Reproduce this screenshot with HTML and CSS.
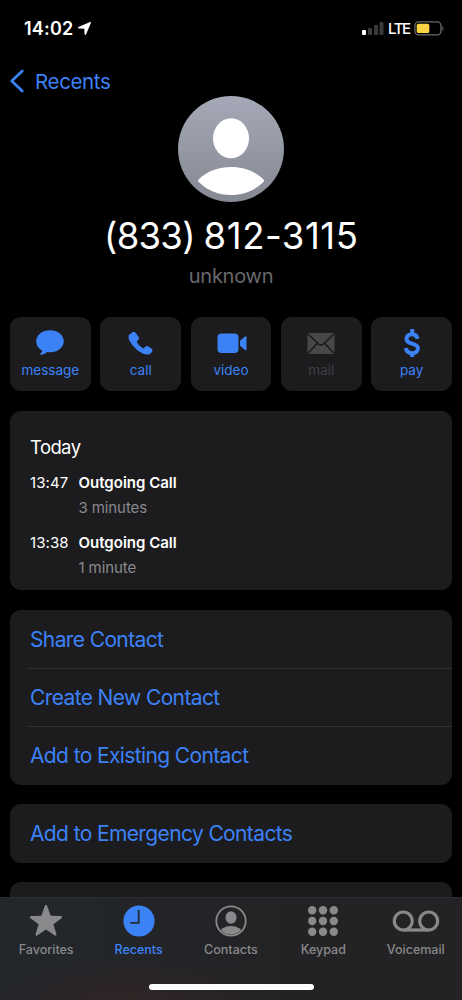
FILE: index.html
```html
<!DOCTYPE html>
<html lang="en">
<head>
<meta charset="utf-8">
<title>Contact</title>
<link rel="stylesheet" href="styles.css">
</head>
<body>
<div class="phone">
  <header class="status">
    <span class="time">14:02</span>
    <svg class="loc" width="13" height="13" viewBox="0 0 13 13"><path d="M12.100.1.4 5c-.6.300-.4 1.500.2 1.500l5.700.3.300 5.500c0 .8 1.100.9 1.400.2L12.900.9c.2-.5-.2-1-.8-.8Z"/></svg>
    <svg class="signal" width="22" height="14" viewBox="0 0 22 14"><rect class="on" x="0" y="8" width="4" height="5" rx="1"/><rect x="6" y="6" width="4" height="7" rx="1"/><rect x="12" y="3" width="4" height="10" rx="1"/><rect x="17.500" y="0" width="4" height="13" rx="1"/></svg>
    <span class="lte">LTE</span>
    <svg class="battery" width="31" height="15" viewBox="0 0 31 15"><rect class="shell" x=".9" y=".9" width="26" height="13" rx="3.600"/><rect class="charge" x="2.700" y="2.700" width="12.600" height="9.400" rx="1.600"/><path class="tip" d="M28.300 5v4.800c1.600-.6 1.600-4.200 0-4.800Z"/></svg>
  </header>
  <nav class="back">
    <svg width="16" height="24" viewBox="0 0 16 24"><path d="M13.200 2 2.700 12l10.500 10"/></svg>
    <span>Recents</span>
  </nav>
  <section class="profile">
    <svg width="106" height="106" viewBox="0 0 106 106">
      <defs><linearGradient id="av" x2="0" y2="1"><stop offset="0" stop-color="#a5a9b7"/><stop offset="1" stop-color="#858993"/></linearGradient></defs>
      <circle cx="53" cy="53" r="53" fill="url(#av)"/>
      <ellipse cx="53" cy="42.300" rx="18" ry="20" fill="#fff"/>
      <path fill="#fff" d="M20.700 83.500C28 76 39 71 53 71s25 5 32.500 12.500c1 1 .8 1.800-.3 2.800C76 95 65.500 99 53 99s-23-4-32-12.700c-1.100-1-1.300-1.800-.3-2.800Z"/>
    </svg>
    <h1><span class="area">(833)</span> <span class="number">812-3115</span></h1>
    <p>unknown</p>
  </section>
  <section class="actions">
    <div class="tile"><svg width="30" height="28" viewBox="0 0 30 28"><path d="M15 1.200C7.200 1.200 1.200 6 1.200 12.200c0 4 2.300 7.300 6 9.200-.3 1.300-1 2.500-1.900 3.500-.4.6 0 1 .6.9 2.800-.4 4.700-1.400 6.300-2.800.9.100 1.800.2 2.800.2 7.800 0 13.800-4.800 13.800-11S22.800 1.200 15 1.200Z"/></svg><span>message</span></div>
    <div class="tile"><svg width="30" height="28" viewBox="0 0 30 28"><path transform="translate(0 .5)" d="M4.300 4.800 6 3.100c1.300-1.200 2.700-1 3.700.3l2.700 3.700c.9 1.300.8 2.300-.3 3.500l-1 1.100c-.4.400-.4.900-.1 1.400 1.500 2.300 3.200 4 5.700 5.500.5.300.9.200 1.300-.2l1-1c1.200-1.200 2.200-1.300 3.500-.4l2.900 2.100c1.400 1 1.500 2.400.3 3.600l-1.200 1.200c-2.100 2-6 1.500-10.500-1.300-4-2.500-7.300-6-9.700-10-2.100-3.700-2.400-6.300-.3-8.300Z"/></svg><span>call</span></div>
    <div class="tile"><svg width="32" height="28" viewBox="0 0 32 28"><rect x="2.500" y="4.500" width="21" height="19.500" rx="4"/><path d="M25 11.700 30 7.500c.8-.6 1.500-.3 1.500.7v12c0 1-.7 1.400-1.500.7L25 16.700Z"/></svg><span>video</span></div>
    <div class="tile off"><svg width="30" height="28" viewBox="0 0 30 28"><rect x="1.500" y="4" width="27" height="21" rx="1.500"/><path class="fold" d="m2 5 10.800 10.100c1.500 1.300 2.900 1.300 4.400 0L28 5M2 24.300l9.500-10.200M28 24.300l-9.500-10.200"/></svg><span>mail</span></div>
    <div class="tile"><svg width="30" height="28" viewBox="0 .3 30 28"><path class="dollar" d="M20.500 10.200c-.6-3-2.500-4.600-5.500-4.600-3.300 0-5.500 1.800-5.500 4.600 0 6 11.400 3.400 11.400 9.400 0 3.100-2.300 4.900-5.800 4.900-3.500 0-5.800-1.900-6.200-5.200M15.200 0v5M15.200 24.200v5"/></svg><span>pay</span></div>
  </section>
  <section class="card history">
    <h2>Today</h2>
    <div class="entry"><time>13:47</time><div><b>Outgoing Call</b><p>3 minutes</p></div></div>
    <div class="entry"><time>13:38</time><div><b>Outgoing Call</b><p>1 minute</p></div></div>
  </section>
  <section class="card list">
    <a>Share Contact</a>
    <a>Create New Contact</a>
    <a>Add to Existing Contact</a>
  </section>
  <section class="card list single"><a>Add to Emergency Contacts</a></section>
  <section class="card peek"></section>
  <footer class="tabbar">
    <div class="tabs">
      <div class="tab"><svg width="36" height="34" viewBox="0 0 36 34"><path transform="translate(.9 -.2) scale(.95)" d="M18 1.200c.7 0 1.100.5 1.400 1.300l3.500 10.100 10.600.2c1.600 0 2 1.500.8 2.400l-8.500 6.400 3.100 10.200c.5 1.500-.8 2.300-2 1.400L18 27l-8.900 6.200c-1.200.9-2.500.1-2-1.400l3.100-10.200-8.500-6.400c-1.200-.9-.8-2.400.8-2.400l10.600-.2 3.500-10.100c.3-.8.7-1.300 1.400-1.300Z"/></svg><span>Favorites</span></div>
      <div class="tab active"><svg width="36" height="34" viewBox="0 0 36 34"><circle cx="18" cy="17" r="15.600"/><path class="hands" d="M17.700 6v12.800H9.300"/></svg><span>Recents</span></div>
      <div class="tab"><svg width="36" height="34" viewBox="0 0 36 34"><defs><clipPath id="c"><circle cx="18" cy="17" r="13.500"/></clipPath></defs><circle class="ring" cx="18" cy="17" r="14.700"/><ellipse cx="18" cy="13.500" rx="5.500" ry="6.200"/><ellipse cx="18" cy="30" rx="11.500" ry="8" clip-path="url(#c)"/></svg><span>Contacts</span></div>
      <div class="tab"><svg width="36" height="34" viewBox="0 0 36 34"><circle cx="7.200" cy="6.200" r="4.200"/><circle cx="18" cy="6.200" r="4.200"/><circle cx="28.800" cy="6.200" r="4.200"/><circle cx="7.200" cy="17" r="4.200"/><circle cx="18" cy="17" r="4.200"/><circle cx="28.800" cy="17" r="4.200"/><circle cx="7.200" cy="27.800" r="4.200"/><circle cx="18" cy="27.800" r="4.200"/><circle cx="28.800" cy="27.800" r="4.200"/></svg><span>Keypad</span></div>
      <div class="tab"><svg width="48" height="34" viewBox="0 0 48 34"><g class="reel"><circle cx="11.300" cy="17" r="9"/><circle cx="36.700" cy="17" r="9"/><path d="M11.300 26h25.400"/></g></svg><span>Voicemail</span></div>
    </div>
    <div class="home"></div>
  </footer>
</div>
</body>
</html>
```
FILE: styles.css
```css
* { box-sizing: border-box; margin: 0; padding: 0; }
body { background: #000; color: #fff; font-family: Inter, sans-serif; }
svg { display: block; flex: none; }
.phone { width: 462px; height: 1000px; overflow: hidden; position: relative; background: #000; }
.status { height: 58px; display: flex; align-items: center; padding: 0 17px 1px 24px; }
.time { font-size: 18px; font-weight: 600; letter-spacing: .2px; width: 50px; white-space: nowrap; }
.loc { fill: #fff; margin-left: 4px; margin-right: auto; }
.signal { fill: #3a3a3c; }
.signal .on { fill: #fff; }
.lte { font-size: 15px; font-weight: 500; width: 22px; margin: 0 4px 0 4px; letter-spacing: -1.4px; }
.shell { fill: none; stroke: #68686a; stroke-width: 1.3; }
.charge { fill: #fbd444; }
.tip { fill: #68686a; }
.back { height: 38px; padding: 5px 0 0 9px; display: flex; gap: 10px; color: #3c82f7; font-size: 20.5px; align-items: flex-start; }
.back svg { fill: none; stroke: #3c82f7; stroke-width: 2.8; stroke-linecap: round; stroke-linejoin: round; margin-top: 6px; }
.back span { line-height: 38px; white-space: nowrap; letter-spacing: -.35px; }
.profile { display: flex; flex-direction: column; align-items: center; height: 221px; }
.profile h1 { font-size: 36.5px; line-height: 44px; font-weight: 400; margin-top: 12px; white-space: nowrap; word-spacing: -1.5px; }
.area { letter-spacing: -.7px; }
.number { letter-spacing: .55px; margin-right: -.55px; }
.profile p { font-size: 20px; line-height: 24px; color: #69696c; margin-top: 6px; letter-spacing: -.25px; }
.actions { margin: 0 10px; display: flex; gap: 9.5px; height: 74px; }
.tile { flex: 1 1 0; background: #1c1c1e; border-radius: 11px; display: flex; flex-direction: column; align-items: center; padding-top: 12px; color: #3c82f7; fill: #3c82f7; font-size: 13.5px; }
.tile span { line-height: 18px; margin-top: 4px; }
.tile.off { color: #3f3f42; fill: #48484a; }
.fold { fill: none; stroke: #1c1c1e; stroke-width: 1.6; }
.dollar { fill: none; stroke: #3c82f7; stroke-width: 4; }
.card { margin: 19.5px 10px 0; background: #1c1c1e; border-radius: 11px; }
.history { height: 179px; padding: 24.5px 20px 0; }
.history h2 { font-size: 18.5px; font-weight: 400; line-height: 24px; letter-spacing: -.6px; margin-bottom: 12px; }
.entry { display: flex; height: 60px; font-size: 15px; line-height: 24px; }
.entry time { width: 48.5px; letter-spacing: .1px; }
.entry b { display: block; font-weight: 600; }
.entry p { color: #89898e; margin-top: 1px; letter-spacing: -.1px; }
.list { overflow: hidden; height: 175px; margin-top: 20px; }
.list a { display: block; height: 58.3px; line-height: 60px; padding-left: 20px; font-size: 21px; letter-spacing: -.62px; color: #3c82f7; white-space: nowrap; }
.list a + a { margin-left: 18px; padding-left: 2px; border-top: 1px solid #303033; line-height: 57px; }
.list.single { height: 58.5px; margin-top: 19.5px; }
.peek { height: 80px; }
.tabbar { position: absolute; left: 0; right: 0; top: 897px; height: 103px; background: radial-gradient(ellipse 150px 45px at 130px 103px, #302425, rgba(48, 36, 37, 0)), linear-gradient(90deg, rgba(34, 42, 50, .5), rgba(35, 35, 37, 0) 60%), #232325; border-top: 1px solid #2b2d30; }
.tabs { display: grid; grid-template-columns: repeat(5, 1fr); height: 64px; padding-top: 6px; }
.tab { display: flex; flex-direction: column; align-items: center; color: #89898b; fill: #89898b; font-size: 12.5px; font-weight: 500; }
.tab span { line-height: 17px; margin-top: 3px; }
.tab.active { color: #3c82f7; fill: #3c82f7; }
.hands { fill: none; stroke: #222a38; stroke-width: 1.8; }
.ring { fill: none; stroke: #89898b; stroke-width: 1.8; }
.reel { fill: none; stroke: #89898b; stroke-width: 3.2; }
.home { width: 165px; height: 6px; border-radius: 3px; background: #fff; margin: 22px auto 0; }
```
